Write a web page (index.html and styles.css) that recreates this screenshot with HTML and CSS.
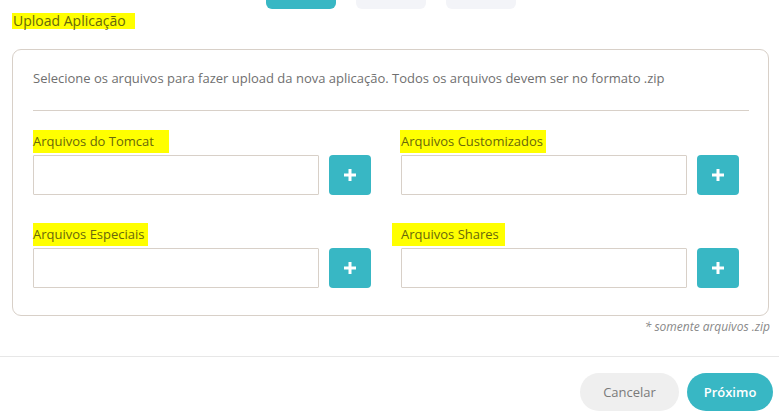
FILE: index.html
```html
<!DOCTYPE html>
<html lang="pt-BR">
<head>
<meta charset="utf-8">
<title>Upload Aplicação</title>
<link rel="stylesheet" href="styles.css">
</head>
<body>
<div class="steps">
  <span class="step step-active"></span>
  <span class="step"></span>
  <span class="step"></span>
</div>
<h1 class="title"><span class="mark mark-title">Upload Aplicação</span></h1>
<section class="card">
  <p class="desc">Selecione os arquivos para fazer upload da nova aplicação. Todos os arquivos devem ser no formato .zip</p>
  <div class="divider"></div>
  <div class="grid">
    <div class="field">
      <label class="label"><span class="mark mark-tomcat">Arquivos do Tomcat</span></label>
      <div class="row">
        <div class="input"></div>
        <button class="add" type="button"><svg width="14" height="14" viewBox="0 0 14 14"><rect x="5.5" y="1" width="3" height="12" fill="#fff"/><rect x="1" y="5.5" width="12" height="3" fill="#fff"/></svg></button>
      </div>
    </div>
    <div class="field">
      <label class="label"><span class="mark mark-custom">Arquivos Customizados</span></label>
      <div class="row">
        <div class="input"></div>
        <button class="add" type="button"><svg width="14" height="14" viewBox="0 0 14 14"><rect x="5.5" y="1" width="3" height="12" fill="#fff"/><rect x="1" y="5.5" width="12" height="3" fill="#fff"/></svg></button>
      </div>
    </div>
    <div class="field">
      <label class="label"><span class="mark mark-esp">Arquivos Especiais</span></label>
      <div class="row">
        <div class="input"></div>
        <button class="add" type="button"><svg width="14" height="14" viewBox="0 0 14 14"><rect x="5.5" y="1" width="3" height="12" fill="#fff"/><rect x="1" y="5.5" width="12" height="3" fill="#fff"/></svg></button>
      </div>
    </div>
    <div class="field">
      <label class="label"><span class="mark mark-shares">Arquivos Shares</span></label>
      <div class="row">
        <div class="input"></div>
        <button class="add" type="button"><svg width="14" height="14" viewBox="0 0 14 14"><rect x="5.5" y="1" width="3" height="12" fill="#fff"/><rect x="1" y="5.5" width="12" height="3" fill="#fff"/></svg></button>
      </div>
    </div>
  </div>
</section>
<p class="note">* somente arquivos .zip</p>
<footer class="footer">
  <button class="btn btn-cancel" type="button">Cancelar</button>
  <button class="btn btn-next" type="button">Próximo</button>
</footer>
</body>
</html>
```
FILE: styles.css
```css
* { box-sizing: border-box; }
html, body { margin: 0; padding: 0; background: #fff; }
body {
  font-family: "Open Sans", "Noto Sans", sans-serif;
  color: #6f6f6f;
  width: 779px;
  height: 413px;
  overflow: hidden;
}
.steps {
  display: flex;
  justify-content: center;
  gap: 20px;
  height: 9px;
  padding-left: 3px;
}
.step {
  width: 70px;
  height: 9px;
  border-radius: 0 0 6px 6px;
  background: #f3f4f8;
}
.step-active { background: #38b7c4; }
.title {
  margin: 4px 0 0 12px;
  font-size: 14px;
  font-weight: 400;
  line-height: 16px;
}
.mark {
  background: #ffff00;
  color: #68680c;
}
.mark-title {
  display: inline-block;
  padding: 0 9px 0 1px;
  line-height: 16px;
}
.card {
  margin: 20px 10px 0 12px;
  border: 1px solid #d8d0c8;
  border-radius: 9px;
  padding: 19px 19px 27px 20px;
}
.desc {
  margin: 0;
  font-size: 13px;
  line-height: 18px;
  color: #6f6f6f;
}
.divider {
  margin-top: 23px;
  border-top: 1px solid #d8d0c8;
}
.grid {
  display: grid;
  grid-template-columns: 338px 338px;
  column-gap: 30px;
  row-gap: 30px;
  margin-top: 21px;
}
.label {
  display: block;
  font-size: 13px;
  line-height: 18px;
  height: 18px;
}
.label .mark {
  display: inline-block;
  padding: 2px 3px 3px 0;
  margin-top: -2px;
}
.mark-tomcat { padding-right: 15px !important; }
.mark-custom { padding-left: 1px !important; margin-left: -1px; }
.mark-shares { padding-left: 9px !important; margin-left: -9px; padding-right: 6px !important; }
.row {
  display: flex;
  gap: 10px;
  margin-top: 5px;
}
.input {
  flex: 1;
  height: 40px;
  border: 1px solid #d8d0c8;
  border-radius: 1px;
  background: #fff;
}
.add {
  width: 42px;
  height: 40px;
  border: 0;
  border-radius: 4px;
  background: #38b7c4;
  display: flex;
  align-items: center;
  justify-content: center;
  padding: 0;
}
.note {
  margin: 3px 9px 0 0;
  text-align: right;
  font-size: 12px;
  line-height: 16px;
  font-style: italic;
  color: #888;
}
.footer {
  margin-top: 21px;
  border-top: 1px solid #e7e7e7;
  display: flex;
  justify-content: flex-end;
  gap: 8px;
  padding: 16px 6px 0 0;
}
.btn {
  height: 38px;
  border: 0;
  border-radius: 19px;
  font-family: "Open Sans", "Noto Sans", sans-serif;
  font-size: 13px;
}
.btn-cancel {
  width: 99px;
  background: #efefef;
  color: #7a7a7a;
}
.btn-next {
  width: 86px;
  background: #38b7c4;
  color: #fff;
  font-weight: 600;
}
```
